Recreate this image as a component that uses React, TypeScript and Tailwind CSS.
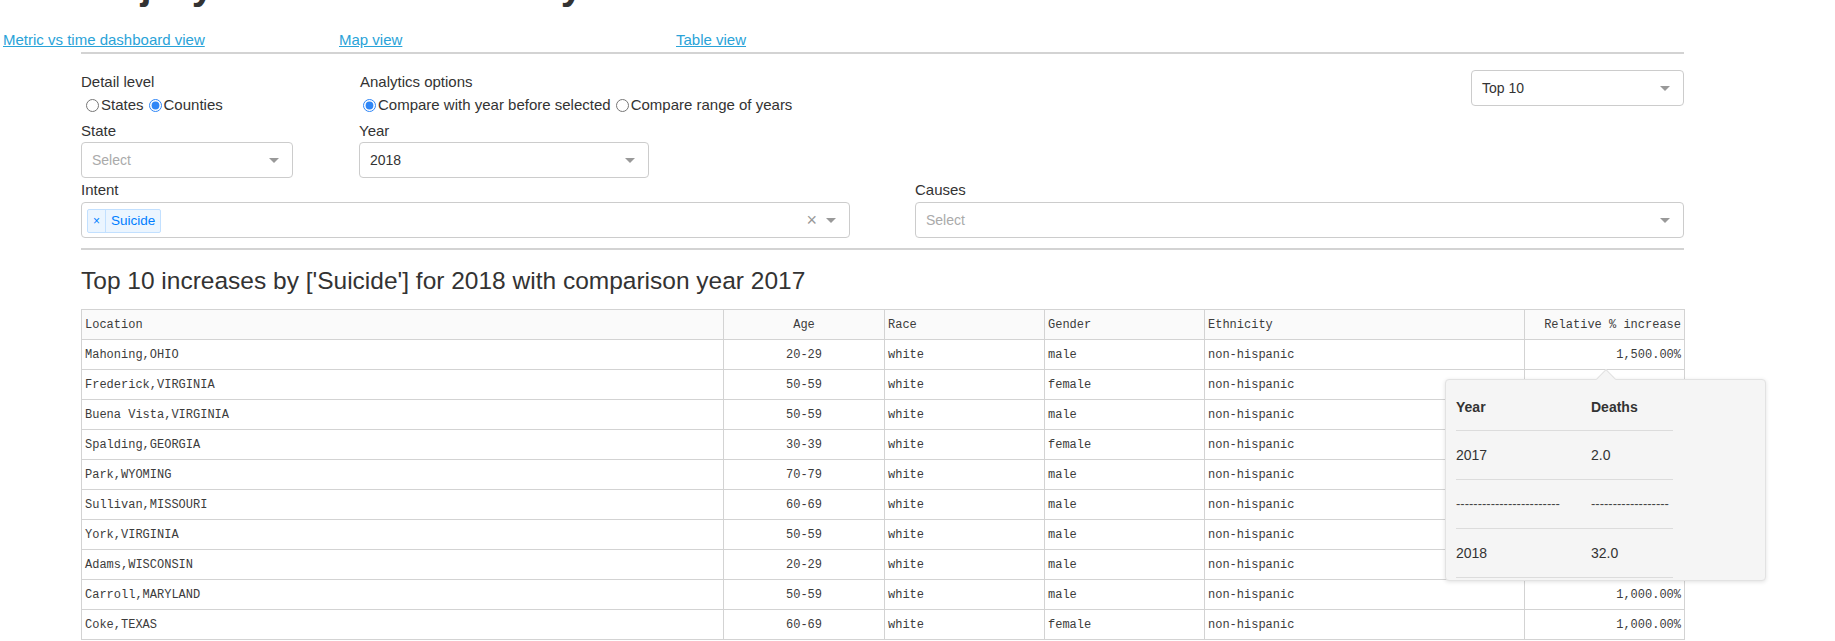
import React from "react";

const rows: string[][] = [
  ["Mahoning,OHIO", "20-29", "white", "male", "non-hispanic", "1,500.00%"],
  ["Frederick,VIRGINIA", "50-59", "white", "female", "non-hispanic", "1,400.00%"],
  ["Buena Vista,VIRGINIA", "50-59", "white", "male", "non-hispanic", "1,300.00%"],
  ["Spalding,GEORGIA", "30-39", "white", "female", "non-hispanic", "1,200.00%"],
  ["Park,WYOMING", "70-79", "white", "male", "non-hispanic", "1,100.00%"],
  ["Sullivan,MISSOURI", "60-69", "white", "male", "non-hispanic", "1,100.00%"],
  ["York,VIRGINIA", "50-59", "white", "male", "non-hispanic", "1,050.00%"],
  ["Adams,WISCONSIN", "20-29", "white", "male", "non-hispanic", "1,000.00%"],
  ["Carroll,MARYLAND", "50-59", "white", "male", "non-hispanic", "1,000.00%"],
  ["Coke,TEXAS", "60-69", "white", "female", "non-hispanic", "1,000.00%"],
];

function Arrow() {
  return <span className="block w-0 h-0 border-t-[5px] border-x-[5px] border-x-transparent border-t-[#999]" />;
}

function SelectBox({ value, placeholder, className }: { value?: string; placeholder?: string; className: string }) {
  return (
    <div className={`h-[36px] border border-[#ccc] rounded-[4px] bg-white flex items-center pl-[10px] pr-[13px] ${className}`}>
      <span className={`flex-1 text-[14px] ${value ? "text-[#333]" : "text-[#aaa]"}`}>{value ?? placeholder}</span>
      <Arrow />
    </div>
  );
}

const cellBase = "h-[30px] border border-[#d3d3d3] px-[3px] whitespace-nowrap";

export default function App() {
  return (
    <div className="w-[1835px] h-[641px] overflow-hidden bg-white text-[#333] font-['Liberation_Sans',Arial,sans-serif] text-[15px]">
      {/* cut off title */}
      <div className="h-[30px] overflow-hidden">
        <h1 className="-mt-[35px] pl-[105px] text-[40px] leading-[40px] font-bold text-[#333] whitespace-nowrap">
          Injury Death Statistics by Location
        </h1>
      </div>

      {/* links */}
      <div className="flex h-[20px] leading-[20px] text-[15px]">
        <div className="w-[336px] pl-[3px]">
          <a href="#" className="text-[#2aa3d8] underline">Metric vs time dashboard view</a>
        </div>
        <div className="w-[336px] pl-[3px]">
          <a href="#" className="text-[#2aa3d8] underline">Map view</a>
        </div>
        <div className="w-[336px] pl-[4px]">
          <a href="#" className="text-[#2aa3d8] underline">Table view</a>
        </div>
      </div>

      <div className="ml-[81px] w-[1603px]">
        <div className="mt-[2px] border-t-2 border-[#d3d3d3]" />

        {/* row 1 */}
        <div className="mt-[16px] flex items-start">
          <div className="w-[279px] pt-[2px]">
            <div className="leading-[20px]">Detail level</div>
            <div className="h-[26px] flex items-center">
              <input type="radio" name="lvl" className="ml-[5px] mr-[2px] w-[13px] h-[13px] accent-[#2f86f6]" />
              <span>States</span>
              <input type="radio" name="lvl" defaultChecked className="ml-[5px] mr-[2px] w-[13px] h-[13px] accent-[#2f86f6]" />
              <span>Counties</span>
            </div>
          </div>
          <div className="pt-[2px]">
            <div className="leading-[20px]">Analytics options</div>
            <div className="h-[26px] flex items-center">
              <input type="radio" name="ana" defaultChecked className="ml-[3px] mr-[2px] w-[13px] h-[13px] accent-[#2f86f6]" />
              <span>Compare with year before selected</span>
              <input type="radio" name="ana" className="ml-[5px] mr-[2px] w-[13px] h-[13px] accent-[#2f86f6]" />
              <span>Compare range of years</span>
            </div>
          </div>
          <div className="ml-auto">
            <SelectBox value="Top 10" className="w-[213px]" />
          </div>
        </div>

        {/* row 2 */}
        <div className="mt-[3px] flex">
          <div className="w-[278px]">
            <div className="leading-[20px]">State</div>
            <SelectBox placeholder="Select" className="mt-[1px] w-[212px]" />
          </div>
          <div>
            <div className="leading-[20px]">Year</div>
            <SelectBox value="2018" className="mt-[1px] w-[290px]" />
          </div>
        </div>

        {/* row 3 */}
        <div className="mt-[2px] flex gap-[65px]">
          <div className="w-[769px]">
            <div className="leading-[20px]">Intent</div>
            <div className="mt-[2px] h-[36px] border border-[#ccc] rounded-[4px] bg-white flex items-center pl-[5px] pr-[13px]">
              <div className="flex items-stretch mt-[2px] h-[24px] border border-[#c2e0ff] bg-[#ebf5ff] rounded-[2px] text-[#007eff] text-[13.5px]">
                <span className="px-[5px] flex items-center border-r border-[#c2e0ff] text-[12px]">×</span>
                <span className="px-[5px] flex items-center">Suicide</span>
              </div>
              <div className="flex-1" />
              <span className="text-[#999] text-[18px] leading-none mr-[9px]">×</span>
              <Arrow />
            </div>
          </div>
          <div className="w-[769px]">
            <div className="leading-[20px]">Causes</div>
            <SelectBox placeholder="Select" className="mt-[2px] w-[769px]" />
          </div>
        </div>

        <div className="mt-[10px] border-t-2 border-[#d3d3d3]" />

        <h2 className="mt-[17px] text-[24.5px] leading-[28px] font-normal text-[#333] whitespace-nowrap">
          Top 10 increases by ['Suicide'] for 2018 with comparison year 2017
        </h2>

        {/* table */}
        <div className="relative mt-[14px]">
          <table className="table-fixed border-collapse w-[1603px] font-['Liberation_Mono',monospace] text-[12px] text-[#3c3c3c]">
            <colgroup>
              <col className="w-[642px]" />
              <col className="w-[161px]" />
              <col className="w-[160px]" />
              <col className="w-[160px]" />
              <col className="w-[320px]" />
              <col className="w-[160px]" />
            </colgroup>
            <thead>
              <tr className="bg-[#fafafa]">
                <th className={`${cellBase} text-left font-normal`}>Location</th>
                <th className={`${cellBase} text-center font-normal`}>Age</th>
                <th className={`${cellBase} text-left font-normal`}>Race</th>
                <th className={`${cellBase} text-left font-normal`}>Gender</th>
                <th className={`${cellBase} text-left font-normal`}>Ethnicity</th>
                <th className={`${cellBase} text-right font-normal`}>Relative % increase</th>
              </tr>
            </thead>
            <tbody>
              {rows.map((r) => (
                <tr key={r[0]}>
                  <td className={`${cellBase} text-left`}>{r[0]}</td>
                  <td className={`${cellBase} text-center`}>{r[1]}</td>
                  <td className={`${cellBase} text-left`}>{r[2]}</td>
                  <td className={`${cellBase} text-left`}>{r[3]}</td>
                  <td className={`${cellBase} text-left`}>{r[4]}</td>
                  <td className={`${cellBase} text-right`}>{r[5]}</td>
                </tr>
              ))}
            </tbody>
          </table>

          {/* tooltip */}
          <div className="absolute left-[1364px] top-[70px] w-[321px] h-[202px] bg-[#f5f5f5] border border-[#e2e2e2] rounded-[4px] shadow-[0_1px_4px_rgba(0,0,0,0.12)] pl-[10px] pt-[4px]">
            <div className="absolute -top-[8px] left-[153px] w-[14px] h-[14px] rotate-45 bg-[#f5f5f5] border-l border-t border-[#e2e2e2]" />
            <div className="relative w-[217px] text-[14px] text-[#333]">
              <div className="flex h-[47px] items-center border-b border-[#dcdcdc] font-bold">
                <div className="w-[135px]">Year</div>
                <div>Deaths</div>
              </div>
              <div className="flex h-[49px] items-center border-b border-[#dcdcdc]">
                <div className="w-[135px]">2017</div>
                <div>2.0</div>
              </div>
              <div className="flex h-[49px] items-center border-b border-[#dcdcdc] text-[13px] text-[#444]">
                <div className="w-[135px] overflow-hidden whitespace-nowrap">------------------------</div>
                <div className="w-[82px] overflow-hidden whitespace-nowrap">------------------</div>
              </div>
              <div className="flex h-[49px] items-center border-b border-[#dcdcdc]">
                <div className="w-[135px]">2018</div>
                <div>32.0</div>
              </div>
            </div>
          </div>
        </div>
      </div>
    </div>
  );
}
